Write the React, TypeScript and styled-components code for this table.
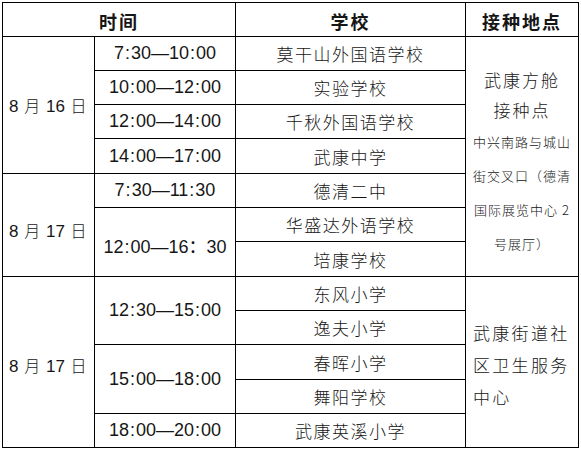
import styled, { createGlobalStyle } from "styled-components";

const GlobalStyle = createGlobalStyle`
  html, body {
    margin: 0;
    padding: 0;
    background: #ffffff;
  }
  body {
    font-family: "Liberation Sans", "Noto Sans CJK SC", sans-serif;
    color: #161616;
  }
`;

const Page = styled.div`
  padding: 2px 0 0 2px;
  width: 581px;
  height: 451px;
  box-sizing: border-box;
  background: #fff;
`;

const Table = styled.table`
  width: 577px;
  border-collapse: collapse;
  table-layout: fixed;
  border: 1px solid #000;
`;

const HeadRow = styled.tr`
  height: 33.5px;
`;

const Row = styled.tr`
  height: 34.33px;
`;

const Cell = styled.td`
  border: 1px solid #000;
  padding: 0;
  text-align: center;
  vertical-align: middle;
  white-space: nowrap;
  overflow: hidden;
`;

const HeadCell = styled(Cell)`
  padding-top: 3px;
  font-family: "Noto Sans CJK SC", sans-serif;
  font-weight: 700;
  font-size: 18px;
  letter-spacing: 2px;
`;

const DateCell = styled(Cell)<{ $drop?: number }>`
  text-align: left;
  padding: ${({ $drop }) => `${$drop ?? 0}px 0 0 6px`};
  font-size: 17px;
  word-spacing: 1px;
`;

const Month = styled.span`
  font-family: "Noto Sans CJK SC", sans-serif;
  font-weight: 300;
  font-size: 16px;
`;

const TimeCell = styled(Cell)<{ $drop?: number }>`
  padding-top: ${({ $drop }) => $drop ?? 0}px;
  font-family: "Liberation Sans", "Noto Sans CJK SC", sans-serif;
  font-size: 18px;
  letter-spacing: 0;
`;

const Colon = styled.span`
  margin: 0 1px;
`;

const SchoolCell = styled(Cell)`
  font-family: "Noto Sans CJK SC", sans-serif;
  font-weight: 300;
  font-size: 17px;
  letter-spacing: 1.5px;
`;

const PlaceCell = styled(Cell)`
  vertical-align: top;
  padding-top: 28px;
  font-family: "Noto Sans CJK SC", sans-serif;
  font-weight: 300;
`;

const ClinicCell = styled(Cell)`
  text-align: left;
  padding: 6px 0 0 7px;
  font-family: "Noto Sans CJK SC", sans-serif;
  font-weight: 300;
  font-size: 17px;
  letter-spacing: 2.3px;
`;

const BigLine = styled.div`
  font-size: 17px;
  line-height: 30px;
  letter-spacing: 2px;
`;

const SmallLine = styled.div`
  font-size: 13px;
  line-height: 34px;
  letter-spacing: 1px;
`;

const ClinicLine = styled.div`
  line-height: 32px;
`;

function Clock({ text }: { text: string }) {
  const parts = text.split(":");
  return (
    <>
      {parts.map((p, i) => (
        <span key={i}>
          {i > 0 && <Colon>:</Colon>}
          {p}
        </span>
      ))}
    </>
  );
}

function Day({ d }: { d: string }) {
  return (
    <>
      8 <Month>月</Month> {d} <Month>日</Month>
    </>
  );
}

export default function App() {
  return (
    <Page>
      <GlobalStyle />
      <Table>
        <colgroup>
          <col style={{ width: 92 }} />
          <col style={{ width: 141 }} />
          <col style={{ width: 230 }} />
          <col style={{ width: 113 }} />
        </colgroup>
        <tbody>
          <HeadRow>
            <HeadCell colSpan={2}>时间</HeadCell>
            <HeadCell>学校</HeadCell>
            <HeadCell>接种地点</HeadCell>
          </HeadRow>

          <Row>
            <DateCell rowSpan={4}>
              <Day d="16" />
            </DateCell>
            <TimeCell>
              <Clock text="7:30—10:00" />
            </TimeCell>
            <SchoolCell>莫干山外国语学校</SchoolCell>
            <PlaceCell rowSpan={7}>
              <BigLine>武康方舱</BigLine>
              <BigLine>接种点</BigLine>
              <SmallLine>中兴南路与城山</SmallLine>
              <SmallLine>街交叉口（德清</SmallLine>
              <SmallLine>国际展览中心 2</SmallLine>
              <SmallLine>号展厅）</SmallLine>
            </PlaceCell>
          </Row>
          <Row>
            <TimeCell>
              <Clock text="10:00—12:00" />
            </TimeCell>
            <SchoolCell>实验学校</SchoolCell>
          </Row>
          <Row>
            <TimeCell>
              <Clock text="12:00—14:00" />
            </TimeCell>
            <SchoolCell>千秋外国语学校</SchoolCell>
          </Row>
          <Row>
            <TimeCell>
              <Clock text="14:00—17:00" />
            </TimeCell>
            <SchoolCell>武康中学</SchoolCell>
          </Row>

          <Row>
            <DateCell rowSpan={3} $drop={10}>
              <Day d="17" />
            </DateCell>
            <TimeCell>
              <Clock text="7:30—11:30" />
            </TimeCell>
            <SchoolCell>德清二中</SchoolCell>
          </Row>
          <Row>
            <TimeCell rowSpan={2} $drop={7}>
              <Clock text="12:00—16：30" />
            </TimeCell>
            <SchoolCell>华盛达外语学校</SchoolCell>
          </Row>
          <Row>
            <SchoolCell>培康学校</SchoolCell>
          </Row>

          <Row>
            <DateCell rowSpan={5} $drop={5}>
              <Day d="17" />
            </DateCell>
            <TimeCell rowSpan={2}>
              <Clock text="12:30—15:00" />
            </TimeCell>
            <SchoolCell>东风小学</SchoolCell>
            <ClinicCell rowSpan={5}>
              <ClinicLine>武康街道社</ClinicLine>
              <ClinicLine>区卫生服务</ClinicLine>
              <ClinicLine>中心</ClinicLine>
            </ClinicCell>
          </Row>
          <Row>
            <SchoolCell>逸夫小学</SchoolCell>
          </Row>
          <Row>
            <TimeCell rowSpan={2}>
              <Clock text="15:00—18:00" />
            </TimeCell>
            <SchoolCell>春晖小学</SchoolCell>
          </Row>
          <Row>
            <SchoolCell>舞阳学校</SchoolCell>
          </Row>
          <Row>
            <TimeCell>
              <Clock text="18:00—20:00" />
            </TimeCell>
            <SchoolCell>武康英溪小学</SchoolCell>
          </Row>
        </tbody>
      </Table>
    </Page>
  );
}
